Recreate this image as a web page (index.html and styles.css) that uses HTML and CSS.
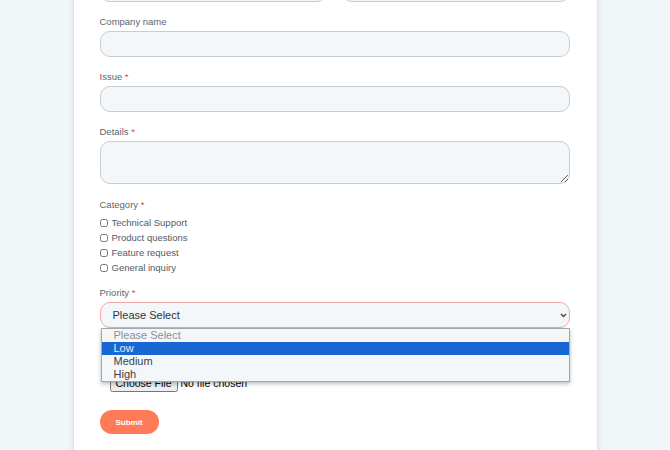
FILE: index.html
```html
<!DOCTYPE html>
<html lang="en">
<head>
    <meta charset="UTF-8">
    <meta name="viewport" content="width=device-width, initial-scale=1.0">
    <title>Support request</title>
    <link rel="stylesheet" href="styles.css">
</head>
<body>
    <form class="card">
        <div class="row">
            <div class="field">
                <label>First name <span class="req">*</span></label>
                <input type="text" class="input">
            </div>
            <div class="field">
                <label>Last name <span class="req">*</span></label>
                <input type="text" class="input">
            </div>
        </div>

        <div class="field">
            <label>Company name</label>
            <input type="text" class="input">
        </div>

        <div class="field">
            <label>Issue <span class="req">*</span></label>
            <input type="text" class="input">
        </div>

        <div class="field">
            <label>Details <span class="req">*</span></label>
            <textarea class="input textarea"></textarea>
        </div>

        <div class="field">
            <label>Category <span class="req">*</span></label>
            <div class="checks">
                <label class="check"><input type="checkbox"> Technical Support</label>
                <label class="check"><input type="checkbox"> Product questions</label>
                <label class="check"><input type="checkbox"> Feature request</label>
                <label class="check"><input type="checkbox"> General inquiry</label>
            </div>
        </div>

        <div class="field priority">
            <label>Priority <span class="req">*</span></label>
            <div class="select-wrap">
                <select class="input select">
                    <option>Please Select</option>
                    <option>Low</option>
                    <option>Medium</option>
                    <option>High</option>
                </select>
                <svg class="chevron" width="7" height="5" viewBox="0 0 7 5">
                    <polyline points="1,1 3.5,3.5 6,1" fill="none" stroke="#444" stroke-width="1.4"/>
                </svg>
                <div class="popup">
                    <div class="opt disabled">Please Select</div>
                    <div class="opt active">Low</div>
                    <div class="opt">Medium</div>
                    <div class="opt">High</div>
                </div>
            </div>
        </div>

        <div class="field attach">
            <label>Attachment</label>
            <input type="file" class="file">
        </div>

        <button type="button" class="submit">Submit</button>
    </form>
</body>
</html>
```

FILE: styles.css
```css
body {
    margin: 0;
    background-color: #f1f6f9;
    font-family: "Liberation Sans", Arial, sans-serif;
    overflow: hidden;
}
.card {
    width: 523px;
    box-sizing: border-box;
    margin: -39px auto 0;
    padding: 0 27px 40px 26px;
    background-color: #fff;
    box-shadow: 0 0 6px rgba(120, 150, 175, 0.35);
}
.row {
    display: flex;
    gap: 15px;
}
.row .field {
    flex: 1;
}
.field {
    margin-bottom: 14px;
}
.field > label {
    display: block;
    font-size: 9.5px;
    line-height: 12px;
    color: #5b6573;
    margin-bottom: 3px;
}
.req {
    color: #e4424d;
}
.input {
    display: block;
    width: 100%;
    box-sizing: border-box;
    height: 26px;
    border: 1px solid #c8ccd1;
    border-radius: 10px;
    background-color: #f3f7fa;
    font-family: inherit;
}
.textarea {
    height: 43px;
    resize: vertical;
    margin-bottom: 15px;
}
.checks {
    display: flex;
    flex-direction: column;
    padding-top: 1px;
    margin-bottom: -2px;
}
.check {
    display: flex;
    align-items: center;
    height: 15px;
    font-size: 9.5px;
    color: #4f5a68;
}
.check input {
    width: 8px;
    height: 8px;
    margin: 0 4px 0 0;
}
.select-wrap {
    position: relative;
}
.select {
    appearance: none;
    border-color: #f2a7ad;
    padding-left: 12px;
    font-size: 11px;
    color: #333;
}
.chevron {
    position: absolute;
    right: 3px;
    top: 11px;
}
.popup {
    position: absolute;
    left: 1px;
    right: 0;
    top: 26px;
    background-color: #f3f7fa;
    border: 1px solid #a4a8ad;
    box-shadow: 0 2px 4px rgba(0, 0, 0, 0.25);
    z-index: 2;
}
.opt {
    height: 13px;
    line-height: 13px;
    padding-left: 12px;
    font-size: 11px;
    color: #3a3f45;
}
.opt.disabled {
    color: #8c9096;
}
.opt.active {
    background-color: #1967d2;
    color: #e8eef6;
}
.attach {
    padding-left: 10px;
}
.field .file {
    margin: 17px 0 4px;
    font-size: 10.5px;
    font-family: inherit;
}
.file::file-selector-button {
    padding: 1px 4px;
    margin-right: 3px;
    font-family: inherit;
    font-size: 10.5px;
}
.submit {
    width: 59px;
    height: 24px;
    border: none;
    border-radius: 12px;
    background-color: #ff7a57;
    color: #fff;
    font-family: inherit;
    font-size: 8px;
    font-weight: bold;
}
```
